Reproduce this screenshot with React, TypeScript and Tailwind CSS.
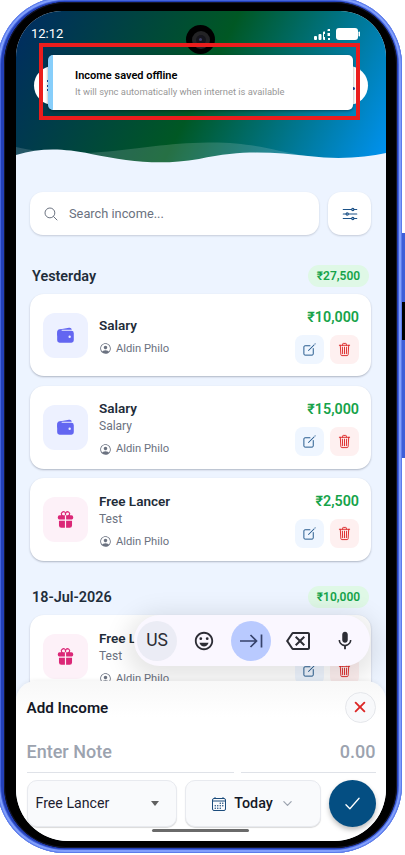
import type { ReactNode } from "react";
import {
  IoCalendarOutline,
  IoCheckmarkOutline,
  IoChevronDown,
  IoClose,
  IoCreateOutline,
  IoGift,
  IoOptionsOutline,
  IoPersonCircleOutline,
  IoSearchOutline,
  IoTrashOutline,
  IoWallet,
} from "react-icons/io5";
import { MdMic, MdOutlineBackspace, MdOutlineEmojiEmotions } from "react-icons/md";

type Income = {
  id: number;
  kind: "salary" | "freelance";
  title: string;
  note?: string;
  person: string;
  amount: string;
};

const yesterday: Income[] = [
  { id: 1, kind: "salary", title: "Salary", person: "Aldin Philo", amount: "₹10,000" },
  { id: 2, kind: "salary", title: "Salary", note: "Salary", person: "Aldin Philo", amount: "₹15,000" },
  { id: 3, kind: "freelance", title: "Free Lancer", note: "Test", person: "Aldin Philo", amount: "₹2,500" },
];

const earlier: Income[] = [
  { id: 4, kind: "freelance", title: "Free Lancer", note: "Test", person: "Aldin Philo", amount: "₹10,000" },
];

function IncomeCard({ item }: { item: Income }) {
  const salary = item.kind === "salary";
  return (
    <div className={`flex items-center rounded-[14px] bg-white pl-[13px] pr-[12px] shadow-[0_1px_2px_rgba(15,23,42,0.28)] ${item.note ? "h-[83px]" : "h-[82px]"}`}>
      <div className={`grid h-[45px] w-[45px] shrink-0 place-items-center rounded-[12px] ${salary ? "bg-[#edf1ff] text-[#6366f1]" : "bg-[#fdf1f8] text-[#db2777]"}`}>
        {salary ? <IoWallet size={19} /> : <IoGift size={19} />}
      </div>
      <div className="ml-[11px] flex-1 pt-[3px]">
        <div className="whitespace-nowrap text-[13.5px] font-semibold leading-[18px] text-[#1f2d3a]">{item.title}</div>
        {item.note && <div className="text-[12px] leading-[18px] text-[#6b7280]">{item.note}</div>}
        <div className={`flex items-center text-[#6b7280] ${item.note ? "mt-[5px]" : "mt-[6px]"}`}>
          <IoPersonCircleOutline size={13} />
          <span className="ml-[4px] whitespace-nowrap text-[11.2px] leading-[18px]">{item.person}</span>
        </div>
      </div>
      <div className="flex flex-col items-end">
        <div className="pt-px text-[14.3px] font-semibold leading-[18px] text-[#16a34a]">{item.amount}</div>
        <div className="mt-[9px] flex gap-[6px]">
          <button className="grid h-[29px] w-[29px] place-items-center rounded-[8px] bg-[#eff6ff] text-[#1c5288]">
            <IoCreateOutline size={15} />
          </button>
          <button className="grid h-[29px] w-[29px] place-items-center rounded-[8px] bg-[#fef0f0] text-[#dc2626]">
            <IoTrashOutline size={15} />
          </button>
        </div>
      </div>
    </div>
  );
}

function DayHeader({ label, total }: { label: string; total: string }) {
  return (
    <div className="flex h-[22px] items-center justify-between pl-[2px] pr-[2px]">
      <span className="pt-[2px] text-[14.4px] font-semibold text-[#1f2d3a]">{label}</span>
      <span className="grid h-[22px] w-[61px] place-items-center rounded-full bg-[#dff8e6] text-[12px] font-semibold text-[#16a34a]">{total}</span>
    </div>
  );
}

function Toast() {
  return (
    <div className="absolute left-[23px] top-[32px] h-[77px] w-[321px] border-4 border-[#ea1d1d] pl-[5px] pt-[8px]">
      <div className="flex h-[55px] w-[305px] flex-col justify-center rounded-[5px] border-l-[5px] border-[#87cefa] bg-white pl-[22px] pt-px shadow-[0_1px_3px_rgba(0,0,0,0.4)]">
        <div className="text-[11px] font-semibold leading-[16px] text-black">Income saved offline</div>
        <div className="text-[9.4px] leading-[15px] text-[#979797]">It will sync automatically when internet is available</div>
      </div>
    </div>
  );
}

function Header() {
  return (
    <div className="relative h-[155px] bg-[linear-gradient(117deg,#002b63_0%,#005824_50%,#0093f5_100%)]">
      <svg className="absolute bottom-0 left-0" width="370" height="40" viewBox="0 0 370 40" fill="none">
        <path d="M0 21 C20 26 55 29 85 26 C125 23 150 17 192 16.500 C235 16 255 24 290 30 C305 32 315 32 325 32 L325 40 L0 40Z" fill="#fff" fillOpacity="0.15" />
        <path d="M0 29 C25 22 45 22 75 28 C112 35 142 40 183 33 C230 23 260 27 292 30 C325 34 350 31 370 27 L370 40 L0 40Z" fill="#edf4ff" />
      </svg>
      <div className="flex h-[46px] items-center justify-between pl-[15px] pr-[26px] text-white">
        <span className="text-[13px]">12:12</span>
        <div className="flex items-center gap-[5px]">
          <svg width="17" height="13" viewBox="0 0 17 13" fill="#fff">
            <rect x="0" y="8" width="3" height="4" rx="1" />
            <rect x="4.5" y="6" width="3" height="6" rx="1" />
            <path d="M9 4.5q0-1 1-1h1V6h-1v3h1v3h-1q-1 0-1-1z" />
            <path d="M13.5 2q0-1 1-1h1.5v2h-2.5zM13.5 5H16v3h-2.500zM14 10h2v2h-2z" />
          </svg>
          <svg width="24" height="12" viewBox="0 0 24 12" fill="#fff">
            <rect width="22" height="12" rx="3" />
            <rect x="22.500" y="3.500" width="1.500" height="5" rx="0.7" />
          </svg>
        </div>
      </div>
      <div className="mx-[18px] mt-[9px] flex h-[39px] items-center justify-between rounded-full bg-white px-[13px] text-[12px] font-bold text-[#1c4a9a]">
        <span className="h-[11px] w-[2px] border-l-2 border-dotted border-[#1c4a9a]" />
        <span className="mt-[5px] h-[3px] w-[3px] rounded-full bg-[#1c4a9a]" />
      </div>
      {/* front camera */}
      <div className="absolute left-[170px] top-[14px] grid h-[29px] w-[29px] place-items-center rounded-full bg-black">
        <div className="grid h-[18px] w-[18px] place-items-center rounded-full bg-[#232325]">
          <div className="grid h-[10px] w-[10px] place-items-center rounded-full bg-[#15151c]">
            <div className="h-[3px] w-[3px] rounded-full bg-[#3d3d66]" />
          </div>
        </div>
      </div>
      <Toast />
    </div>
  );
}

function Key({ className = "", children }: { className?: string; children: ReactNode }) {
  return <div className={`grid h-[40px] w-[40px] place-items-center rounded-full ${className}`}>{children}</div>;
}

function KeyboardBar() {
  return (
    <div className="absolute left-[118px] top-[604px] flex h-[51px] w-[236px] items-center justify-between rounded-full bg-[#faf7ff] pl-[3px] pr-[5px] text-[#2c2d35] shadow-[0_6px_24px_8px_rgba(0,0,0,0.10)]">
      <Key className="bg-[#ebecf5] text-[17.5px]">US</Key>
      <Key>
        <MdOutlineEmojiEmotions size={22} />
      </Key>
      <Key className="bg-[#b9caff] text-[#36426b]">
        <svg width="24" height="16" viewBox="0 0 24 16" fill="none" stroke="currentColor" strokeWidth="1.7">
          <path d="M1 8h16.500M11.500 2l6 6-6 6M22.500 1.500v13" />
        </svg>
      </Key>
      <Key>
        <MdOutlineBackspace size={24} />
      </Key>
      <Key>
        <MdMic size={22} />
      </Key>
    </div>
  );
}

function AddIncomeSheet() {
  return (
    <div className="absolute bottom-0 left-0 h-[160px] w-[370px] rounded-t-[20px] bg-[linear-gradient(180deg,#f8f8f8_0px,#ffffff_36px)] pl-[10.5px] pr-[10.5px] pt-[10px] shadow-[0_-1px_4px_rgba(0,0,0,0.06)]">
      <div className="flex h-[32px] items-center justify-between">
        <span className="pt-[2px] text-[15.2px] font-semibold text-[#141827]">Add Income</span>
        <button className="grid h-[31px] w-[31px] place-items-center rounded-full border border-[#e5e7eb] bg-[#f8f9fb] text-[#dc2626]">
          <IoClose size={20} />
        </button>
      </div>
      <div className="mt-[8px] flex gap-[7px] text-[18px] font-medium text-[#9ca3af]">
        <div className="flex h-[42px] w-[207px] items-center border-b border-[#dfe2e8]">Enter Note</div>
        <div className="flex h-[42px] flex-1 items-center justify-end border-b border-[#dfe2e8]">0.00</div>
      </div>
      <div className="mt-[7px] flex items-center gap-[8px]">
        <div className="flex h-[47px] w-[150px] items-center justify-between rounded-[10px] border border-[#e8eaef] bg-[#f9fafc] pl-[8px] pr-[17px] shadow-[0_1px_1px_rgba(0,0,0,0.15)]">
          <span className="pt-px text-[14.2px] text-[#1d2030]">Free Lancer</span>
          <span className="h-0 w-0 border-x-[4.5px] border-t-[5px] border-x-transparent border-t-[#606060]" />
        </div>
        <div className="flex h-[47px] w-[136px] items-center justify-center rounded-[10px] border border-[#e8eaef] bg-[#f9fafc] shadow-[0_1px_1px_rgba(0,0,0,0.15)]">
          <IoCalendarOutline size={16} className="text-[#1c4c7c]" />
          <span className="ml-[7px] text-[14.3px] font-medium text-[#141827]">Today</span>
          <IoChevronDown size={13} className="ml-[8px] text-[#9ca3af]" />
        </div>
        <button className="grid h-[47px] w-[47px] shrink-0 place-items-center rounded-full bg-[#044e82] text-white shadow-[0_3px_5px_rgba(0,0,0,0.25)]">
          <IoCheckmarkOutline size={21} />
        </button>
      </div>
      <div className="absolute bottom-[9px] left-[136px] h-[3px] w-[97px] rounded-full bg-[#6a6a6a]" />
    </div>
  );
}

export default function App() {
  return (
    <div className="relative h-[855px] w-[405px] overflow-hidden bg-white font-[Roboto,sans-serif]">
      {/* side buttons */}
      <div className="absolute left-[401px] top-[233px] h-[69px] w-[4px] bg-[#3e5fd8]" />
      <div className="absolute left-[401px] top-[302px] h-[38px] w-[4px] bg-black" />
      <div className="absolute left-[401px] top-[340px] h-[118px] w-[4px] bg-[#3e5fd8]" />
      <div className="flow-root">
        <div className="relative -ml-[3px] -mt-[3px] flex h-[856px] w-[405px] rounded-[68px] bg-[#2340b8] pb-[5px] pl-[7px] pr-[5px] pt-[5px] shadow-[inset_0_0_0_1px_#5b7bec,inset_0_0_0_3px_#819ffb,inset_0_0_0_4px_#4463dc]">
          <div className="flex flex-1 rounded-[62px] bg-black pb-[7px] pl-[12px] pr-[11px] pt-[9px] shadow-[inset_0_0_0_1px_#15172a]">
            <div className="relative h-[830px] w-[370px] overflow-hidden rounded-b-[52px] rounded-t-[46px] bg-[#edf4ff]">
              <Header />
              <div className="pl-[14px] pr-[15px] pt-[26px]">
                <div className="flex gap-[9px]">
                  <div className="flex h-[43px] w-[289px] items-center rounded-[13px] bg-white pl-[13px] text-[#6b7280] shadow-[0_1px_2px_rgba(15,23,42,0.18)]">
                    <IoSearchOutline size={16} />
                    <span className="ml-[10px] text-[12.8px]">Search income...</span>
                  </div>
                  <button className="grid h-[43px] w-[43px] place-items-center rounded-[13px] bg-white text-[#1c5288] shadow-[0_1px_2px_rgba(15,23,42,0.18)]">
                    <IoOptionsOutline size={18} />
                  </button>
                </div>
                <div className="mt-[30px]">
                  <DayHeader label="Yesterday" total="₹27,500" />
                  <div className="mt-[7px] flex flex-col gap-[9.5px]">
                    {yesterday.map((item) => (
                      <IncomeCard key={item.id} item={item} />
                    ))}
                  </div>
                </div>
                <div className="mt-[25px]">
                  <DayHeader label="18-Jul-2026" total="₹10,000" />
                  <div className="mt-[7px]">
                    {earlier.map((item) => (
                      <IncomeCard key={item.id} item={item} />
                    ))}
                  </div>
                </div>
              </div>
              <KeyboardBar />
              <AddIncomeSheet />
            </div>
          </div>
        </div>
      </div>
    </div>
  );
}
